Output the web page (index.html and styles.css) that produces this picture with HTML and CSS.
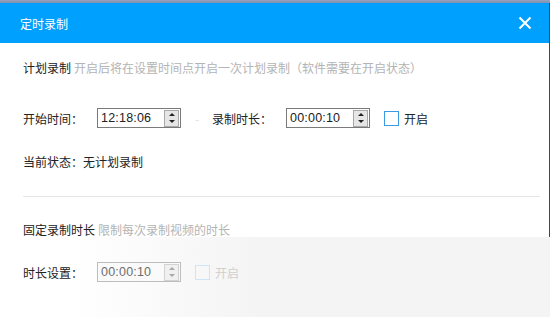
FILE: index.html
```html
<!DOCTYPE html>
<html lang="zh-CN">

<head>
    <meta charset="UTF-8">
    <meta name="viewport" content="width=device-width, initial-scale=1.0">
    <title>定时录制</title>
    <link rel="stylesheet" href="styles.css">
</head>

<body>
    <div class="window">
        <div class="top-strip"></div>

        <div class="titlebar">
            <span class="title">定时录制</span>
            <svg class="close" width="14" height="14" viewBox="0 0 14 14">
                <path d="M1.5 1.5 L12.5 12.5 M12.5 1.5 L1.5 12.5" stroke="#fff" stroke-width="2" fill="none" />
            </svg>
        </div>

        <div class="section">
            <div class="heading">计划录制<span class="hint">开启后将在设置时间点开启一次计划录制（软件需要在开启状态）</span></div>

            <div class="row row-start">
                <span class="label">开始时间：</span>
                <div class="timebox">
                    <span class="time">12:18:06</span>
                    <div class="spin">
                        <span class="arrow up"></span>
                        <span class="arrow down"></span>
                    </div>
                </div>
                <span class="dash">-</span>
                <span class="label">录制时长：</span>
                <div class="timebox">
                    <span class="time">00:00:10</span>
                    <div class="spin">
                        <span class="arrow up"></span>
                        <span class="arrow down"></span>
                    </div>
                </div>
                <label class="check"><span class="box"></span>开启</label>
            </div>

            <div class="status">当前状态：无计划录制</div>

            <div class="divider"></div>

            <div class="heading heading-fixed">固定录制时长<span class="hint">限制每次录制视频的时长</span></div>
        </div>

        <div class="section section-faded">
            <div class="row row-length">
                <span class="label">时长设置：</span>
                <div class="timebox disabled">
                    <span class="time">00:00:10</span>
                    <div class="spin">
                        <span class="arrow up"></span>
                        <span class="arrow down"></span>
                    </div>
                </div>
                <label class="check disabled"><span class="box"></span>开启</label>
            </div>
        </div>
    </div>
</body>

</html>
```

FILE: styles.css
```css
body {
    margin: 0;
    font-family: "Noto Sans CJK SC", "Liberation Sans", sans-serif;
    font-size: 12px;
    color: #222;
    background-color: #fff;
}

.window {
    width: 550px;
    height: 317px;
    overflow: hidden;
    display: flex;
    flex-direction: column;
}

.top-strip {
    height: 3px;
    background: linear-gradient(to bottom, #95a3bd, #7d8fb0);
}

.titlebar {
    height: 40px;
    display: flex;
    align-items: center;
    justify-content: space-between;
    padding: 0 17px 0 20px;
    background-color: #00a0ff;
    border-right: 1px solid #22507f;
}

.title {
    color: #fff;
    font-size: 12px;
}

.close {
    display: block;
}

.section {
    padding: 12px 0 0 23px;
    border-right: 1px solid #22507f;
}

.heading {
    height: 24px;
    display: flex;
    align-items: center;
    white-space: nowrap;
}

.hint {
    margin-left: 3px;
    color: #b4b4b4;
}

.row {
    height: 24px;
    display: flex;
    align-items: center;
}

.row-start {
    margin-top: 27px;
}

.label {
    width: 74px;
    flex-shrink: 0;
}

.timebox {
    width: 84px;
    height: 20px;
    box-sizing: border-box;
    border: 1px solid #7a7a7a;
    background-color: #fff;
    display: flex;
    align-items: center;
    justify-content: space-between;
    padding: 0 1px 0 3px;
}

.time {
    font-family: "Liberation Sans", sans-serif;
    font-size: 12.5px;
    letter-spacing: 0.2px;
}

.spin {
    width: 13px;
    height: 15px;
    border: 1px solid #a8a8a8;
    background-color: #e6e6e6;
    display: flex;
    flex-direction: column;
    align-items: center;
    justify-content: space-around;
}

.arrow {
    width: 0;
    height: 0;
    border-left: 3px solid transparent;
    border-right: 3px solid transparent;
}

.arrow.up {
    border-bottom: 3px solid #222;
}

.arrow.down {
    border-top: 3px solid #222;
}

.dash {
    width: 3px;
    margin: 0 14px;
    color: #e0e0e0;
}

.check {
    display: flex;
    align-items: center;
    margin-left: 14px;
}

.box {
    width: 15px;
    height: 15px;
    box-sizing: border-box;
    border: 1px solid #3a9ae4;
    margin-right: 5px;
}

.status {
    height: 24px;
    margin-top: 19px;
    display: flex;
    align-items: center;
}

.divider {
    height: 1px;
    margin: 23px 9px 0 0;
    background-color: #e6e6e6;
}

.heading-fixed {
    height: 16px;
    margin-top: 24px;
}

.section-faded {
    flex: 1;
    padding-top: 23px;
    border-right: none;
    background: linear-gradient(to right, #fff 70px, #f4f4f4 260px);
}

.timebox.disabled {
    border-color: #bdbdbd;
    background-color: #fafafa;
    color: #6d6d6d;
}

.timebox.disabled .spin {
    border-color: #d2d2d2;
    background-color: #f0f0f0;
}

.timebox.disabled .arrow.up {
    border-bottom-color: #a8a8a8;
}

.timebox.disabled .arrow.down {
    border-top-color: #a8a8a8;
}

.check.disabled {
    color: #cfcfcf;
}

.check.disabled .box {
    border-color: #cde5f7;
}
```
